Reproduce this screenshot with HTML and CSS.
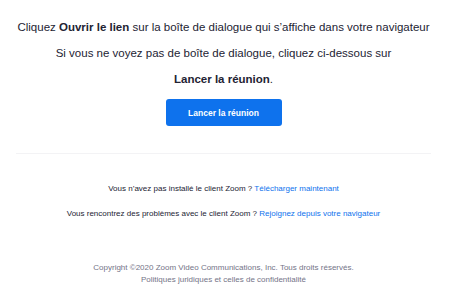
FILE: index.html
```html
<!DOCTYPE html>
<html lang="fr">
<head>
  <meta charset="utf-8">
  <title>Lancer la réunion - Zoom</title>
  <link rel="stylesheet" href="styles.css">
</head>
<body>
  <div class="launch">
    <div class="intro">
      <p>Cliquez <strong>Ouvrir le lien</strong> sur la boîte de dialogue qui s’affiche dans votre navigateur</p>
      <p>Si vous ne voyez pas de boîte de dialogue, cliquez ci-dessous sur</p>
      <p><strong>Lancer la réunion</strong>.</p>
    </div>
    <button class="btn-lancer">Lancer la réunion</button>
  </div>

  <div class="help">
    <p>Vous n’avez pas installé le client Zoom ? <a href="#">Télécharger maintenant</a></p>
    <p>Vous rencontrez des problèmes avec le client Zoom ? <a href="#">Rejoignez depuis votre navigateur</a></p>
  </div>

  <footer class="footer">
    <p>Copyright ©2020 Zoom Video Communications, Inc. Tous droits réservés.</p>
    <p>Politiques juridiques et celles de confidentialité</p>
  </footer>
</body>
</html>
```

FILE: styles.css
```css
body {
  margin: 0;
  padding-right: 3px;
  font-family: 'Liberation Sans', Arial, sans-serif;
  color: #232333;
  background: #fff;
}

p {
  margin: 0;
}

.launch {
  margin: 0 16px;
  padding: 14px 0 27px;
  border-bottom: 1px solid #f3f3f5;
  text-align: center;
}

.intro p {
  font-size: 11.5px;
  line-height: 26px;
}

.btn-lancer {
  display: block;
  margin: 7px auto 0;
  width: 116px;
  height: 27px;
  background: #0e72ed;
  border: none;
  border-radius: 3px;
  color: #fff;
  font-family: inherit;
  font-size: 8.5px;
  font-weight: bold;
}

.help {
  padding-top: 22px;
  text-align: center;
}

.help p {
  font-size: 8px;
  line-height: 25px;
}

.help a {
  color: #0e72ed;
  text-decoration: none;
}

.footer {
  padding-top: 36px;
  text-align: center;
  color: #747487;
}

.footer p {
  font-size: 8px;
  line-height: 12px;
}
```
